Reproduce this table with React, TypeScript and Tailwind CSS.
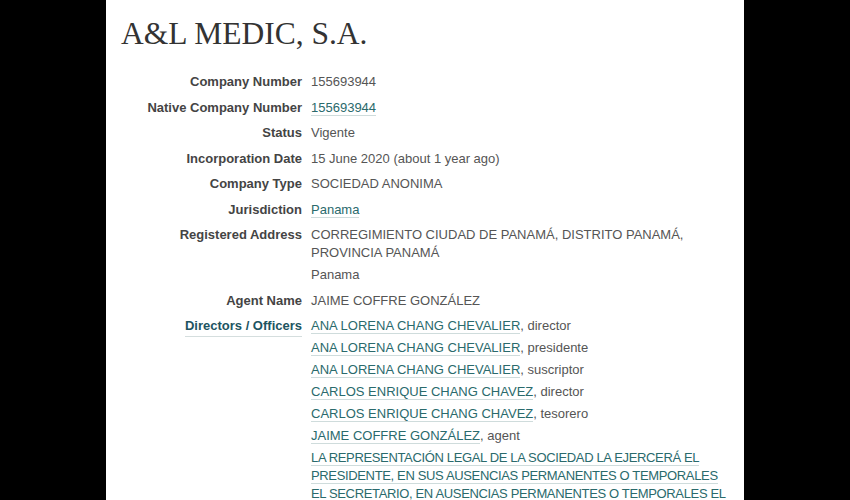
import React from 'react';

type Part = { text: string; link?: boolean; suffix?: string; tight?: boolean };

const rows: { label: string; labelLink?: boolean; values: Part[] }[] = [
  { label: 'Company Number', values: [{ text: '155693944' }] },
  { label: 'Native Company Number', values: [{ text: '155693944', link: true }] },
  { label: 'Status', values: [{ text: 'Vigente' }] },
  { label: 'Incorporation Date', values: [{ text: '15 June 2020 (about 1 year ago)' }] },
  { label: 'Company Type', values: [{ text: 'SOCIEDAD ANONIMA' }] },
  { label: 'Jurisdiction', values: [{ text: 'Panama', link: true }] },
  {
    label: 'Registered Address',
    values: [{ text: 'CORREGIMIENTO CIUDAD DE PANAMÁ, DISTRITO PANAMÁ, PROVINCIA PANAMÁ' }, { text: 'Panama' }],
  },
  { label: 'Agent Name', values: [{ text: 'JAIME COFFRE GONZÁLEZ' }] },
  {
    label: 'Directors / Officers',
    labelLink: true,
    values: [
      { text: 'ANA LORENA CHANG CHEVALIER', link: true, suffix: ', director' },
      { text: 'ANA LORENA CHANG CHEVALIER', link: true, suffix: ', presidente' },
      { text: 'ANA LORENA CHANG CHEVALIER', link: true, suffix: ', suscriptor' },
      { text: 'CARLOS ENRIQUE CHANG CHAVEZ', link: true, suffix: ', director' },
      { text: 'CARLOS ENRIQUE CHANG CHAVEZ', link: true, suffix: ', tesorero' },
      { text: 'JAIME COFFRE GONZÁLEZ', link: true, suffix: ', agent' },
      {
        text: 'LA REPRESENTACIÓN LEGAL DE LA SOCIEDAD LA EJERCERÁ EL PRESIDENTE, EN SUS AUSENCIAS PERMANENTES O TEMPORALES EL SECRETARIO, EN AUSENCIAS PERMANENTES O TEMPORALES EL TESORERO.',
        link: true,
        tight: true,
      },
    ],
  },
];

const App: React.FC = () => {
  return (
    <div className="flex h-[500px] justify-center overflow-hidden bg-black">
      <div
        className="w-[638px] bg-white pl-[15px] pr-[13px] pt-[16px]"
        style={{ fontFamily: '"Liberation Sans", Arial, sans-serif' }}
      >
        <h1
          className="text-[31.5px] leading-[36px] text-[#333]"
          style={{ fontFamily: '"Liberation Serif", "Times New Roman", serif' }}
        >
          A&amp;L MEDIC, S.A.
        </h1>

        <div className="mt-[21px] grid grid-cols-[181px_1fr] gap-x-[9px] text-[13px] leading-[18px]">
          {rows.map((row) => (
            <React.Fragment key={row.label}>
              <div className="mb-[7.5px] text-right font-bold text-[#444]">
                {row.labelLink ? (
                  <span className="border-b border-[#d5dede] pb-[3px] text-[#1d5461]">{row.label}</span>
                ) : (
                  row.label
                )}
              </div>
              <div className="mb-[7.5px] flex flex-col gap-[4px] text-[#555]">
                {row.values.map((v, i) => (
                  <div key={i} className={v.tight ? 'tracking-[-0.35px]' : ''}>
                    {v.link ? (
                      <span className="border-b border-[#cfdcdc] text-[#2a6a6c]">{v.text}</span>
                    ) : (
                      v.text
                    )}
                    {v.suffix}
                  </div>
                ))}
              </div>
            </React.Fragment>
          ))}
        </div>
      </div>
    </div>
  );
};

export default App;
